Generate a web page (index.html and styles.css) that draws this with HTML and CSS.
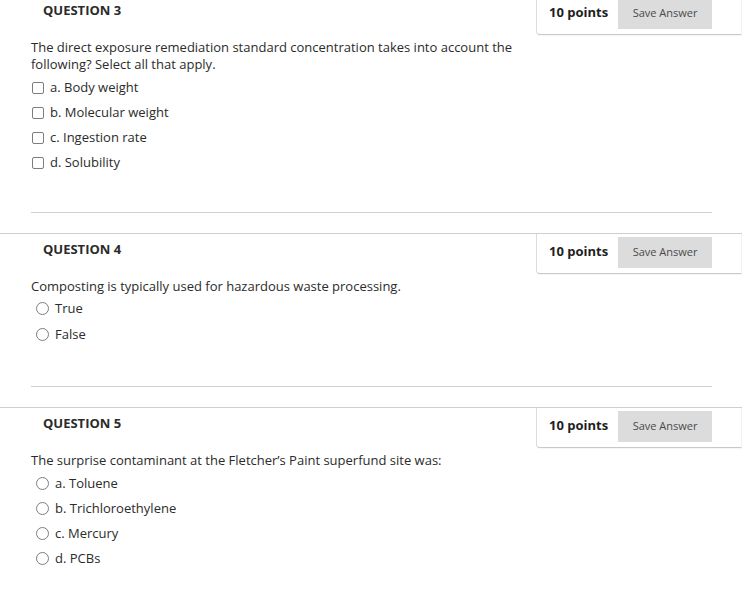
FILE: index.html
```html
<!DOCTYPE html>
<html lang="en">
<head>
<meta charset="utf-8">
<title>Questions</title>
<link rel="stylesheet" href="styles.css">
</head>
<body>
<div class="page">
  <section class="question">
    <div class="q-header">
      <h3 class="q-title">QUESTION 3</h3>
      <div class="points-box">
        <span class="points">10 points</span>
        <button class="save">Save Answer</button>
      </div>
    </div>
    <div class="q-body">
      <p class="q-text">The direct exposure remediation standard concentration takes into account the following? Select all that apply.</p>
      <ul class="options">
        <li class="option"><span class="check"></span>a. Body weight</li>
        <li class="option"><span class="check"></span>b. Molecular weight</li>
        <li class="option"><span class="check"></span>c. Ingestion rate</li>
        <li class="option"><span class="check"></span>d. Solubility</li>
      </ul>
      <hr class="divider">
    </div>
  </section>
  <section class="question question-tf">
    <div class="q-header">
      <h3 class="q-title">QUESTION 4</h3>
      <div class="points-box">
        <span class="points">10 points</span>
        <button class="save">Save Answer</button>
      </div>
    </div>
    <div class="q-body">
      <p class="q-text">Composting is typically used for hazardous waste processing.</p>
      <ul class="options">
        <li class="option"><span class="radio"></span>True</li>
        <li class="option"><span class="radio"></span>False</li>
      </ul>
      <hr class="divider">
    </div>
  </section>
  <section class="question">
    <div class="q-header">
      <h3 class="q-title">QUESTION 5</h3>
      <div class="points-box">
        <span class="points">10 points</span>
        <button class="save">Save Answer</button>
      </div>
    </div>
    <div class="q-body">
      <p class="q-text">The surprise contaminant at the Fletcher’s Paint superfund site was:</p>
      <ul class="options">
        <li class="option"><span class="radio"></span>a. Toluene</li>
        <li class="option"><span class="radio"></span>b. Trichloroethylene</li>
        <li class="option"><span class="radio"></span>c. Mercury</li>
        <li class="option"><span class="radio"></span>d. PCBs</li>
      </ul>
    </div>
  </section>
</div>
</body>
</html>
```
FILE: styles.css
```css
html, body {
  margin: 0;
  padding: 0;
  background: #fff;
}
body {
  font-family: "Open Sans", "Liberation Sans", sans-serif;
  font-size: 13px;
  line-height: 17px;
  color: #2b2b2b;
}
.page {
  width: 742px;
  margin-top: -6px;
}
.question {
  border-top: 1px solid #cfcfcf;
}
.q-header {
  display: flex;
  justify-content: space-between;
  align-items: flex-start;
}
.q-title {
  margin: 0;
  padding: 7px 0 0 43px;
  font-size: 13px;
  line-height: 17px;
  font-weight: 700;
  color: #2b2b2b;
}
.points-box {
  display: flex;
  align-items: center;
  width: 206px;
  box-sizing: border-box;
  padding: 3px 29px 5px 12px;
  border-left: 1px solid #dcdcdc;
  border-right: 1px solid #f2f2f2;
  border-bottom: 1px solid #c9c9c9;
  border-bottom-left-radius: 4px;
  box-shadow: 0 1px 1px rgba(0,0,0,0.04);
}
.points {
  font-weight: 700;
  font-size: 13px;
  line-height: 15px;
  color: #1e1e1e;
  margin: 0 10px 2px 0;
  white-space: nowrap;
}
.save {
  width: 95px;
  height: 31px;
  border: none;
  background: #dcdcdc;
  color: #4a4a4a;
  font-family: "Open Sans", "Liberation Sans", sans-serif;
  font-size: 11px;
  line-height: 13px;
  padding: 0 0 2px;
  margin-left: auto;
}
.q-body {
  padding: 4px 30px 20px 31px;
}
.q-text {
  margin: 0;
  width: 490px;
}
.options {
  list-style: none;
  margin: 2px 0 0;
  padding: 0;
}
.option {
  display: flex;
  align-items: center;
  height: 25px;
}
.question-tf .options {
  margin-top: 0;
}
.question-tf .option {
  height: 26px;
}
.check {
  width: 10px;
  height: 10px;
  border: 1px solid #7d7d7d;
  border-radius: 2px;
  margin: 0 6px 0 1px;
  flex: none;
}
.radio {
  width: 11px;
  height: 11px;
  border: 1px solid #7d7d7d;
  border-radius: 50%;
  margin: 0 6px 0 5px;
  flex: none;
}
.divider {
  border: none;
  border-top: 1px solid #d0d0d0;
  margin: 37px 0 0;
  height: 0;
}
.question-tf .divider {
  margin-top: 39px;
}
```
